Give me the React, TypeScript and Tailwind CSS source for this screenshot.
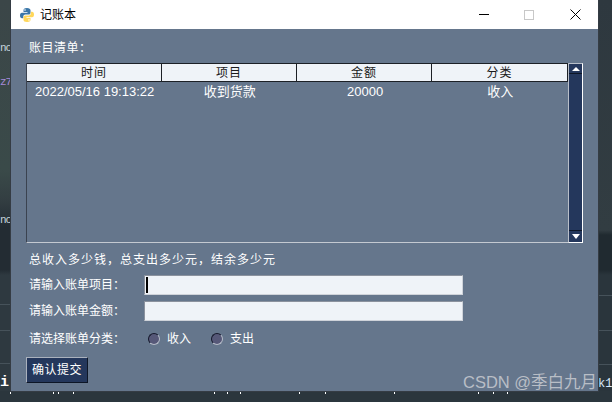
const cjk = "font-['Liberation_Sans','Noto_Sans_CJK_SC',sans-serif]";
const mono = "font-['Liberation_Mono',monospace]";

const columns = ["时间", "项目", "金额", "分类"];
const row = ["2022/05/16 19:13:22", "收到货款", "20000", "收入"];
const ticks = [10, 53, 58, 73, 214, 227, 240, 299, 325, 394, 478, 493, 507];

function PythonLogo() {
  return (
    <svg width="16" height="16" viewBox="0 0 16 16">
      <path d="M8 1C5 1 4.500 2 4.500 3.500V5H8.500V5.700H3C1.500 5.700 1 7 1 8.500C1 10.200 1.700 11.300 3 11.300H4.300V9.500C4.300 8.300 5.300 7.500 6.300 7.500H9.700C10.800 7.500 11.500 6.700 11.500 5.700V3.300C11.500 2 10.300 1 8 1Z" fill="#3a76a8" />
      <path d="M8 15C11 15 11.500 14 11.500 12.500V11H7.500V10.300H13C14.500 10.300 15 9 15 7.500C15 5.800 14.300 4.700 13 4.700H11.800V6.500C11.800 7.700 10.800 8.500 9.800 8.500H6.300C5.200 8.500 4.500 9.300 4.500 10.300V12.700C4.500 14 5.700 15 8 15Z" fill="#ffd75a" />
      <circle cx="6" cy="3" r="0.8" fill="#fff" />
      <circle cx="10" cy="13" r="0.8" fill="#fff" />
    </svg>
  );
}

function Radio({ label }: { label: string }) {
  return (
    <div className="flex items-center gap-[7px]">
      <span className="h-3 w-3 rounded-full border border-t-[#15182c] border-l-[#15182c] border-r-[#b6bcc8] border-b-[#b6bcc8] bg-[#565878]" />
      <span>{label}</span>
    </div>
  );
}

function TextInput({ caret }: { caret?: boolean }) {
  return (
    <div className="flex h-5 w-[319px] items-center border border-t-[#8b929e] border-l-[#8b929e] border-r-[#cfd3da] border-b-[#cfd3da] bg-[#eff3f8] pl-[1px]">
      {caret && <span className="h-4 w-0.5 bg-black" />}
    </div>
  );
}

export default function App() {
  return (
    <div className="relative h-[402px] w-[612px] overflow-hidden bg-[#2b363d]">
      {/* desktop strips either side of the window */}
      <div className="absolute left-0 top-0 h-[391px] w-[11px] bg-[linear-gradient(#3b4648_0,#3a4a49_170px,#333e42_200px,#232c33_227px,#232c33_270px,#2e3940_275px,#2e3940_391px)]" />
      <div className="absolute right-0 top-0 h-[391px] w-[14px] bg-[linear-gradient(#2e383f_0,#323d42_230px,#202a30_235px,#202a30_270px,#2a353c_275px,#2a353c_391px)]" />
      <div className="absolute left-0 top-[304px] h-px w-[11px] bg-[#46525a]" />
      <div className="absolute left-0 top-[330px] h-px w-[11px] bg-[#46525a]" />
      <div className="absolute left-0 top-[363px] h-px w-[11px] bg-[#46525a]" />
      <div className="absolute right-0 top-[295px] h-px w-[14px] bg-[#46525a]" />
      <div className="absolute right-0 top-[330px] h-px w-[14px] bg-[#46525a]" />
      <div className="absolute right-0 top-[364px] h-px w-[14px] bg-[#46525a]" />

      {/* editor text behind the window */}
      <div className={`absolute left-0 top-[40px] ${mono} text-[11px] tracking-[-1px] text-[#c5d3dc]`}>nc</div>
      <div className={`absolute left-0 top-[74px] ${mono} text-[11px] tracking-[-1px] text-[#a78bda]`}>z7</div>
      <div className={`absolute left-0 top-[212px] ${mono} text-[11px] tracking-[-1px] text-[#c5d3dc]`}>nc</div>
      <div className={`absolute left-0 top-[372px] ${mono} text-[15px] font-bold text-white`}>i</div>
      <div className={`absolute left-[598px] top-[375px] ${mono} text-[12px] text-[#d5e8fb]`}>k1</div>
      {ticks.map((x) => (
        <span key={x} className="absolute top-[391px] h-[3px] w-px bg-white" style={{ left: x }} />
      ))}

      {/* app window */}
      <div className={`absolute left-[10px] top-0 flex h-[392px] w-[589px] flex-col border-x border-b border-[#353c44] ${cjk}`}>
        <div className="flex h-[29px] shrink-0 items-center bg-white pl-[8px]">
          <PythonLogo />
          <span className="ml-[5px] text-[12px] text-black">记账本</span>
          <div className="ml-auto flex items-center gap-[35px] pr-[17px]">
            <span className="h-px w-[10px] bg-black" />
            <span className="h-[10px] w-[10px] border border-[#c8c8c8]" />
            <svg className="ml-px" width="11" height="11" viewBox="0 0 11 11"><path d="M.5.500 10.500 10.500M10.500.500.500 10.500" stroke="#000" fill="none" /></svg>
          </div>
        </div>

        <div className="flex flex-1 flex-col bg-[#65768c] pl-[15px] text-[12px] leading-none text-white">
          <div className="ml-[3px] mt-[13px] h-[21px] tracking-[0.5px]">账目清单：</div>

          <div className="flex">
            <div className="flex h-[180px] w-[542px] flex-col border-b border-l border-b-[#c4c9d1] border-l-[#3b4350]">
              <div className="grid h-[19px] grid-cols-4 border-y border-r border-[#1c2026] bg-[#eff3f8] text-[#1a1a1a]">
                {columns.map((c, i) => (
                  <div key={c} className={`flex items-center justify-center tracking-[1px] ${i < 3 ? "border-r border-[#1c2026]" : ""}`}>{c}</div>
                ))}
              </div>
              <div className="grid h-[18px] grid-cols-4 items-center text-center text-[13px]">
                {row.map((c) => <div key={c}>{c}</div>)}
              </div>
            </div>
            <div className="flex h-[180px] w-[15px] flex-col border-x border-b border-t border-l-[#b9bfc9] border-t-[#b9bfc9] border-r-white border-b-white bg-[#24375c]">
              <div className="flex h-[10px] items-center justify-center border-b border-[#0d1626]">
                <span className="h-0 w-0 border-x-[4px] border-b-[4px] border-x-transparent border-b-white" />
              </div>
              <div className="flex-1" />
              <div className="flex h-[12px] items-center justify-center border-t border-[#0d1626]">
                <span className="h-0 w-0 border-x-[4px] border-t-[5px] border-x-transparent border-t-white" />
              </div>
            </div>
          </div>

          <div className="ml-[3px] mt-[11px] tracking-[1px]">总收入多少钱，总支出多少元，结余多少元</div>

          <div className="ml-[3px] mt-[9px] flex h-5 items-center">
            <span className="w-[115px]">请输入账单项目：</span>
            <TextInput caret />
          </div>
          <div className="ml-[3px] mt-[6px] flex h-5 items-center">
            <span className="w-[115px]">请输入账单金额：</span>
            <TextInput />
          </div>
          <div className="ml-[3px] mt-[8px] flex h-5 items-center">
            <span className="w-[119px]">请选择账单分类：</span>
            <Radio label="收入" />
            <div className="ml-[20px]"><Radio label="支出" /></div>
          </div>

          <button className="mt-[8px] h-[26px] w-[62px] border border-t-[#aab1bd] border-l-[#aab1bd] border-r-[#0d1626] border-b-[#0d1626] bg-[#24375c] text-[12px] tracking-[0.5px] text-white">确认提交</button>
        </div>
      </div>

      {/* watermark */}
      <div className={`absolute left-[463px] top-[372px] ${cjk} text-[16.5px] leading-[20px] text-[#b9bec6]`}>CSDN @季白九月</div>
    </div>
  );
}
